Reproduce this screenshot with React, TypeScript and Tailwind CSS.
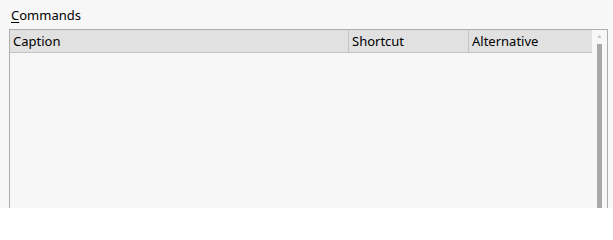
const columns = [
  { label: 'Caption', width: 'w-[338px]' },
  { label: 'Shortcut', width: 'w-[120px]' },
  { label: 'Alternative', width: 'flex-1' },
]

export default function App() {
  return (
    <div
      className="h-[208px] w-[613px] overflow-hidden bg-[#f7f7f7] pl-[9px] pr-[5px] pt-[7px] text-[13px] text-black"
      style={{ fontFamily: '"Segoe UI", "Noto Sans", sans-serif' }}
    >
      <div className="h-[22px] pl-[2px] leading-[16px]">
        <span className="underline underline-offset-[2px]">C</span>ommands
      </div>
      <div className="flex h-[200px] border border-[#adadad] bg-[#f7f7f7]">
        <div className="flex flex-1 flex-col">
          <div className="flex h-[23px] border-b border-[#c4c4c4] bg-[#e1e1e1]">
            {columns.map((col, i) => (
              <div
                key={col.label}
                className={`${col.width} ${i > 0 ? 'border-l border-[#c4c4c4]' : ''} pl-[3px] leading-[23px]`}
              >
                {col.label}
              </div>
            ))}
          </div>
        </div>
        <div className="flex w-[15px] flex-col items-start bg-[#f7f7f7] pl-[5px] pt-[5px]">
          <svg width="5" height="3" viewBox="0 0 5 3" className="mb-[6px]">
            <path d="M0 3 L2.5 0 L5 3 Z" fill="#c2c2c2" />
          </svg>
          <div className="h-[200px] w-[5px] bg-[#a8a8a8]" />
        </div>
      </div>
    </div>
  )
}
